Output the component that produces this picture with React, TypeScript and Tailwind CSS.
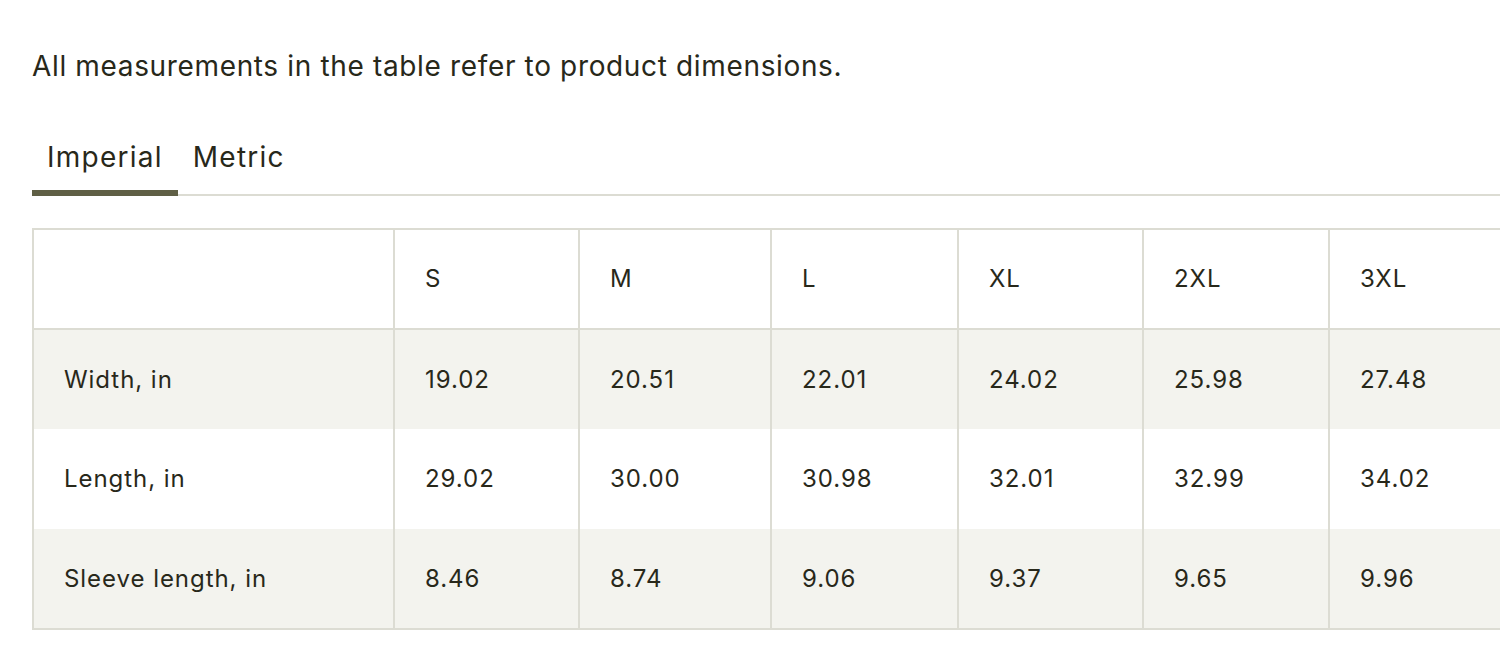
import { useState } from 'react';

const sizes = ['S', 'M', 'L', 'XL', '2XL', '3XL'];
const colWidths = ['w-[185px]', 'w-[192px]', 'w-[187px]', 'w-[185px]', 'w-[186px]', 'w-[186px]'];

const rows = [
  { label: 'Width, in', values: ['19.02', '20.51', '22.01', '24.02', '25.98', '27.48'] },
  { label: 'Length, in', values: ['29.02', '30.00', '30.98', '32.01', '32.99', '34.02'] },
  { label: 'Sleeve length, in', values: ['8.46', '8.74', '9.06', '9.37', '9.65', '9.96'] },
];

const App = () => {
  const [tab, setTab] = useState('Imperial');

  return (
    <div className="min-h-screen w-full overflow-hidden bg-white font-['Inter',sans-serif] text-[#28281a]">
      <div className="pl-8 pt-[46px]">
        <p className="text-[28px] leading-[40px] tracking-[0.65px]">
          All measurements in the table refer to product dimensions.
        </p>

        {/* Tabs */}
        <div className="mt-[51px] flex border-b-2 border-[#dcdcd3]">
          {['Imperial', 'Metric'].map((t) => (
            <button
              className={`-mb-[2px] px-[15px] pb-[13px] text-[28px] leading-[40px] tracking-[1.25px] ${
                t === tab ? 'border-b-[6px] border-[#5f5f45]' : 'border-b-[6px] border-transparent'
              }`}
              key={t}
              onClick={() => setTab(t)}
              type="button"
            >
              {t}
            </button>
          ))}
        </div>

        {/* Size table */}
        <table className="mt-8 w-[1482px] table-fixed border-collapse border-2 border-[#dcdcd3] text-left text-[24px] tracking-[0.95px]">
          <thead>
            <tr className="h-[100px] bg-white">
              <th className="w-[361px] border-2 border-[#dcdcd3] px-[30px] font-normal" />
              {sizes.map((s, i) => (
                <th className={`${colWidths[i]} border-2 border-[#dcdcd3] px-[30px] font-normal`} key={s}>
                  {s}
                </th>
              ))}
            </tr>
          </thead>
          <tbody>
            {rows.map((r, ri) => (
              <tr className={`h-[100px] ${ri % 2 === 0 ? 'bg-[#f3f3ee]' : 'bg-white'}`} key={r.label}>
                <td className="border-x-2 border-[#dcdcd3] px-[30px]">{r.label}</td>
                {r.values.map((v, i) => (
                  <td className="border-x-2 border-[#dcdcd3] px-[30px]" key={i}>
                    {v}
                  </td>
                ))}
              </tr>
            ))}
          </tbody>
        </table>
      </div>
    </div>
  );
};

export default App;
